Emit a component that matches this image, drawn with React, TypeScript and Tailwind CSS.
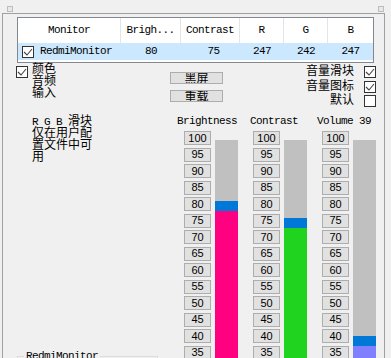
import React from 'react'

const values = [100, 95, 90, 85, 80, 75, 70, 65, 60, 55, 50, 45, 40, 35, 30, 25]

function Check({ on }: { on?: boolean }) {
  return (
    <div className="flex h-[12px] w-[12px] shrink-0 items-center justify-center border border-[#333333] bg-white">
      {on && (
        <svg width="10" height="10" viewBox="0 0 10 10">
          <path d="M1 5l3 3 5-6" fill="none" stroke="#444" strokeWidth="1.1" />
        </svg>
      )}
    </div>
  )
}

function Slider({ title, value, fill, rowClass }: { title: string; value: number; fill: string; rowClass: string }) {
  const gray = Math.round((100 - value) * 3.3 - 5)
  return (
    <div className="flex flex-col">
      <div className="h-[12px] leading-[12px] whitespace-nowrap">{title}</div>
      <div className={rowClass}>
        <div className="flex w-[27px] flex-col gap-[2.5px]">
          {values.map(v => (
            <div
              key={v}
              className="flex h-[14px] w-[27px] items-center justify-center border border-[#adadad] bg-[#e1e1e1] text-[11px] leading-none tracking-normal [font-family:'Liberation_Sans',sans-serif]"
            >
              {v}
            </div>
          ))}
        </div>
        <div className="ml-[4px] mt-[9px] flex h-[240px] w-[23px] flex-col">
          <div className="bg-[#c0c0c0]" style={{ height: gray }} />
          <div className="h-[10px] bg-[#0078d7]" />
          <div className={fill} />
        </div>
      </div>
    </div>
  )
}

export default function App() {
  return (
    <div className="relative h-[358px] w-[391px] overflow-hidden bg-[#f0f0f0] text-[11px] tracking-[-0.6px] text-black [font-family:'Liberation_Mono','Noto_Sans_CJK_SC',monospace]">
      <div className="flex h-[13px] justify-between">
        <div className="ml-[7px] mt-[6px] h-[6px] w-[6px] border border-[#bdbdbd] bg-[#e8e8e8]" />
        <div className="mr-[7px] mt-[6px] h-[6px] w-[6px] border border-[#bdbdbd] bg-[#e8e8e8]" />
      </div>
      <div className="ml-[2px] h-[400px] w-[383px] border-l border-r border-t border-[#a0a0a0]">
        {/* list view */}
        <div className="ml-[14px] mt-[3px] w-[357px] border border-[#828790] bg-white">
          <div className="flex h-[25px] items-center">
            <div className="flex h-full w-[103px] items-center justify-center border-r border-[#e5e5e5]">Monitor</div>
            <div className="flex h-full w-[60px] items-center justify-center border-r border-[#e5e5e5]">Brigh...</div>
            <div className="flex h-full w-[59px] items-center justify-center border-r border-[#e5e5e5]">Contrast</div>
            <div className="flex h-full w-[44px] items-center justify-center border-r border-[#e5e5e5]">R</div>
            <div className="flex h-full w-[44px] items-center justify-center border-r border-[#e5e5e5]">G</div>
            <div className="flex h-full flex-1 items-center justify-center">B</div>
          </div>
          <div className="flex h-[17px] items-center bg-[#cce8ff]">
            <div className="flex w-[103px] items-center pl-[4px]">
              <Check on />
              <span className="ml-[6px]">RedmiMonitor</span>
            </div>
            <div className="w-[60px] text-center">80</div>
            <div className="w-[59px] pl-[6px] text-center">75</div>
            <div className="w-[44px] text-center">247</div>
            <div className="w-[44px] text-center">242</div>
            <div className="flex-1 text-center">247</div>
          </div>
          <div className="h-[2px]" />
        </div>

        {/* options */}
        <div className="flex h-[52px] tracking-normal">
          <div className="ml-[13px] flex w-[154px] items-start">
            <div className="mt-[3px]">
              <Check on />
            </div>
            <div className="ml-[4px] mt-[1px] text-[12px] leading-[12px]">
              <div>颜色</div>
              <div>音频</div>
              <div>输入</div>
            </div>
          </div>
          <div className="flex w-[53px] flex-col">
            <div className="mt-[9px] flex h-[12px] justify-center overflow-hidden border border-[#adadad] bg-[#e1e1e1] pt-[1px] text-[12px] leading-[12px]">
              黑屏
            </div>
            <div className="mt-[6px] flex h-[12px] justify-center overflow-hidden border border-[#adadad] bg-[#e1e1e1] pt-[1px] text-[12px] leading-[12px]">
              重载
            </div>
          </div>
          <div className="flex flex-1 flex-col items-end gap-[2.5px] pr-[8px] pt-[3px] text-[12px] leading-[12px]">
            <div className="flex items-center gap-[10px]">
              <span>音量滑块</span>
              <Check on />
            </div>
            <div className="flex items-center gap-[10px]">
              <span>音量图标</span>
              <Check on />
            </div>
            <div className="flex items-center gap-[10px]">
              <span>默认</span>
              <Check />
            </div>
          </div>
        </div>

        {/* sliders */}
        <div className="flex">
          <div className="flex w-[174px] flex-col">
            <div className="ml-[29px] mt-[1px] text-[12px] leading-[12px] tracking-normal">
              <div>
                <span className="text-[11px] tracking-[-0.6px]">R G B </span>滑块
              </div>
              <div>仅在用户配</div>
              <div>置文件中可</div>
              <div>用</div>
            </div>
            <fieldset className="ml-[14px] mt-[186px] h-[60px] w-[141px] border border-[#dcdcdc]">
              <legend className="ml-[6px] px-[2px] leading-[12px]">RedmiMonitor</legend>
            </fieldset>
          </div>
          <Slider title="Brightness" value={80} fill="flex-1 bg-[#ff0080]" rowClass="ml-[7px] mt-[4px] flex" />
          <div className="ml-[12px]">
            <Slider title="Contrast" value={75} fill="flex-1 bg-[#1fd31f]" rowClass="ml-[3px] mt-[4px] flex" />
          </div>
          <div className="ml-[10px]">
            <Slider title="Volume 39" value={39} fill="flex-1 bg-[#8080ff]" rowClass="ml-[5px] mt-[4px] flex" />
          </div>
        </div>
      </div>
    </div>
  )
}
